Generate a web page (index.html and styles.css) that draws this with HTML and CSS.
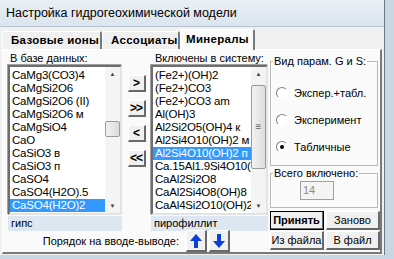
FILE: index.html
```html
<!DOCTYPE html>
<html lang="ru">
<head>
    <meta charset="UTF-8">
    <title>Настройка гидрогеохимической модели</title>
    <link rel="stylesheet" href="styles.css">
</head>
<body>
<div class="window">
    <div class="titlebar">Настройка гидрогеохимической модели</div>
    <div class="client">
        <div class="tabs">
            <div class="tab">Базовые ионы</div>
            <div class="tab">Ассоциаты</div>
            <div class="tab active">Минералы</div>
        </div>
        <div class="panel">
            <div class="lists-part">
                <div class="lists-row">
                    <div class="list-col">
                        <div class="label">В базе данных:</div>
                        <div class="listbox">
                            <ul class="items">
                                <li>CaMg3(CO3)4</li>
                                <li>CaMgSi2O6</li>
                                <li>CaMgSi2O6 (II)</li>
                                <li>CaMgSi2O6 м</li>
                                <li>CaMgSiO4</li>
                                <li>CaO</li>
                                <li>CaSiO3 в</li>
                                <li>CaSiO3 п</li>
                                <li>CaSO4</li>
                                <li>CaSO4(H2O).5</li>
                                <li class="sel">CaSO4(H2O)2</li>
                            </ul>
                            <div class="vscroll">
                                <span class="arr">&#9650;</span>
                                <div class="track"><div class="thumb small"></div></div>
                                <span class="arr">&#9660;</span>
                            </div>
                        </div>
                        <div class="namebox">гипс</div>
                    </div>
                    <div class="move-col">
                        <button class="btn small-btn">&gt;</button>
                        <button class="btn small-btn">&gt;&gt;</button>
                        <button class="btn small-btn">&lt;</button>
                        <button class="btn small-btn">&lt;&lt;</button>
                    </div>
                    <div class="list-col right-list">
                        <div class="label">Включены в систему:</div>
                        <div class="listbox">
                            <ul class="items">
                                <li>(Fe2+)(OH)2</li>
                                <li>(Fe2+)CO3</li>
                                <li>(Fe2+)CO3 am</li>
                                <li>Al(OH)3</li>
                                <li>Al2Si2O5(OH)4 к</li>
                                <li>Al2Si4O10(OH)2 м</li>
                                <li class="sel">Al2Si4O10(OH)2 п</li>
                                <li>Ca.15Al1.9Si4O10(OH)2</li>
                                <li>CaAl2Si2O8</li>
                                <li>CaAl2Si4O8(OH)8</li>
                                <li>CaAl4Si2O10(OH)2</li>
                            </ul>
                            <div class="vscroll">
                                <span class="arr">&#9650;</span>
                                <div class="track"><div class="thumb large"><span class="grip">&#8801;</span></div></div>
                                <span class="arr">&#9660;</span>
                            </div>
                        </div>
                        <div class="namebox">пирофиллит</div>
                    </div>
                </div>
                <div class="order-row">
                    <span>Порядок на вводе-выводе:</span>
                    <button class="btn arrow-btn">
                        <svg width="14" height="16" viewBox="0 0 14 16"><path d="M7 1 L13 8 H9 V15 H5 V8 H1 Z" fill="#0a3fd8"/></svg>
                    </button>
                    <button class="btn arrow-btn">
                        <svg width="14" height="16" viewBox="0 0 14 16"><path d="M7 15 L13 8 H9 V1 H5 V8 H1 Z" fill="#0a3fd8"/></svg>
                    </button>
                </div>
            </div>
            <div class="side-col">
                <fieldset class="group params">
                    <legend>Вид парам. G и S:</legend>
                    <label class="radio"><span class="dot"></span>Экспер.+табл.</label>
                    <label class="radio"><span class="dot"></span>Эксперимент</label>
                    <label class="radio"><span class="dot on"></span>Табличные</label>
                </fieldset>
                <fieldset class="group total">
                    <legend>Всего включено:</legend>
                    <div class="count">14</div>
                </fieldset>
                <div class="btn-grid">
                    <button class="btn cmd default">Принять</button>
                    <button class="btn cmd">Заново</button>
                    <button class="btn cmd">Из файла</button>
                    <button class="btn cmd">В файл</button>
                </div>
            </div>
        </div>
    </div>
</div>
</body>
</html>
```

FILE: styles.css
```css
body {
    margin: 0;
    width: 394px;
    height: 259px;
    overflow: hidden;
    background: #c9d6e3;
    font-family: "Liberation Sans", Arial, sans-serif;
    font-size: 11px;
    color: #000;
    white-space: nowrap;
}
.window {
    width: 384px;
    height: 255px;
    border-right: 1px solid #6d7886;
    background: #f0f0f0;
    display: flex;
    flex-direction: column;
}
.titlebar {
    height: 26px;
    line-height: 26px;
    padding-left: 6px;
    font-size: 12.5px;
    background: linear-gradient(#e9eff5, #dbe5ef);
    border-bottom: 1px solid #b8c4d0;
}
.client {
    flex: 1;
    padding: 2px 2px 3px 2px;
    display: flex;
    flex-direction: column;
}
.tabs {
    display: flex;
    height: 20px;
    align-items: flex-end;
    position: relative;
    z-index: 1;
}
.tab {
    box-sizing: border-box;
    height: 18px;
    line-height: 17px;
    padding-left: 8px;
    font-weight: bold;
    font-size: 11.5px;
    letter-spacing: 0.3px;
    background: #f0f0f0;
    border: 1px solid #fff;
    border-right: 2px solid #7a7a7a;
    border-bottom: none;
    border-radius: 2px 2px 0 0;
}
.tab:first-child {
    width: 100px;
}
.tab:nth-child(2) {
    width: 78px;
}
.tab.active {
    height: 21px;
    width: 75px;
    line-height: 19px;
    padding-left: 5px;
    background: #fafafa;
    margin-bottom: -1px;
}
.panel {
    flex: 1;
    border: 1px solid #fff;
    border-right: 2px solid #7a7a7a;
    border-bottom: 2px solid #7a7a7a;
    background: #fafafa;
    display: flex;
    padding: 1px 3px 0 5px;
}
.lists-part {
    display: flex;
    flex-direction: column;
}
.lists-row {
    display: flex;
}
.list-col {
    width: 114px;
    display: flex;
    flex-direction: column;
}
.right-list {
    width: 117px;
}
.label {
    height: 14px;
    line-height: 14px;
    padding-left: 2px;
}
.right-list .label {
    padding-left: 4px;
}
.listbox {
    height: 146px;
    display: flex;
    border-style: solid;
    border-width: 2px;
    border-color: #6e6e6e #e3e3e3 #e3e3e3 #6e6e6e;
    background: #fff;
    box-shadow: -1px -1px 0 #a0a0a0;
}
.items {
    flex: 1;
    list-style: none;
    margin: 0;
    padding: 2px 0 0 0;
    overflow: hidden;
}
.items li {
    height: 13px;
    line-height: 13px;
    padding-left: 2px;
    font-size: 11.5px;
    letter-spacing: -0.2px;
    overflow: hidden;
}
.items li.sel {
    background: #3399ff;
    color: #fff;
}
.vscroll {
    width: 15px;
    display: flex;
    flex-direction: column;
    align-items: center;
    background: #f4f4f4;
}
.arr {
    height: 14px;
    line-height: 14px;
    font-size: 6px;
    color: #444;
}
.track {
    flex: 1;
    width: 15px;
    position: relative;
}
.thumb {
    position: absolute;
    left: 0;
    width: 13px;
    border: 1px solid #9a9a9a;
    border-radius: 2px;
    background: linear-gradient(90deg, #f2f2f2, #dcdcdc);
}
.thumb.small {
    top: 40px;
    height: 14px;
}
.thumb.large {
    top: 4px;
    height: 82px;
    text-align: center;
}
.grip {
    font-size: 10px;
    color: #666;
    line-height: 82px;
}
.namebox {
    height: 15px;
    line-height: 15px;
    margin-top: 1px;
    padding-left: 3px;
    background: #dde7f2;
}
.move-col {
    width: 29px;
    display: flex;
    flex-direction: column;
    align-items: center;
    gap: 8px;
    padding-top: 24px;
}
.btn {
    font-family: "Liberation Sans", Arial, sans-serif;
    padding: 0;
    background: #f0f0f0;
    border-style: solid;
    border-width: 1px 2px 2px 1px;
    border-color: #fff #696969 #696969 #fff;
    color: #000;
    white-space: nowrap;
}
.small-btn {
    width: 18px;
    height: 17px;
    font-size: 12px;
    font-weight: bold;
    letter-spacing: -1px;
}
.order-row {
    display: flex;
    align-items: center;
    justify-content: flex-end;
    gap: 2px;
    padding-right: 38px;
    margin-top: -1px;
}
.order-row span {
    margin-right: 5px;
}
.arrow-btn {
    width: 21px;
    height: 22px;
    display: flex;
    align-items: center;
    justify-content: center;
}
.side-col {
    width: 108px;
    margin-left: 2px;
    display: flex;
    flex-direction: column;
}
.group {
    margin: 0;
    padding: 0;
    border: 1px solid #b8b8b8;
    box-shadow: 1px 1px 0 #fff inset;
}
.group legend {
    padding: 0 1px;
    margin-left: 2px;
}
.params {
    margin-top: 4px;
    display: flex;
    flex-direction: column;
    gap: 12px;
    padding: 18px 0 11px 0;
}
.radio {
    display: flex;
    align-items: center;
    padding-left: 5px;
    height: 15px;
}
.dot {
    width: 10px;
    height: 10px;
    border-radius: 50%;
    border: 1px solid;
    border-color: #808080 #fff #fff #808080;
    background: #fff;
    margin-right: 6px;
    position: relative;
}
.dot.on::after {
    content: "";
    position: absolute;
    left: 3px;
    top: 3px;
    width: 4px;
    height: 4px;
    border-radius: 50%;
    background: #000;
}
.total {
    margin-top: 1px;
    padding-bottom: 7px;
}
.count {
    width: 30px;
    height: 17px;
    line-height: 17px;
    margin: 2px 0 0 29px;
    padding-left: 2px;
    border: 1px solid #a0a0a0;
    background: #f4f4f4;
    color: #8a8a8a;
}
.btn-grid {
    margin-top: 3px;
    display: grid;
    grid-template-columns: 54px 54px;
    gap: 1px 2px;
}
.cmd {
    height: 19px;
    font-size: 11px;
}
.cmd.default {
    font-weight: bold;
    outline: 1px solid #000;
    outline-offset: -1px;
}
```
